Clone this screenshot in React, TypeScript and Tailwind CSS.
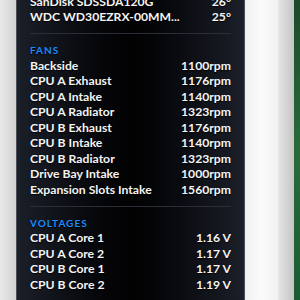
const fans: [string, string][] = [
  ["Backside", "1100rpm"],
  ["CPU A Exhaust", "1176rpm"],
  ["CPU A Intake", "1140rpm"],
  ["CPU A Radiator", "1323rpm"],
  ["CPU B Exhaust", "1176rpm"],
  ["CPU B Intake", "1140rpm"],
  ["CPU B Radiator", "1323rpm"],
  ["Drive Bay Intake", "1000rpm"],
  ["Expansion Slots Intake", "1560rpm"],
];

const voltages: [string, string][] = [
  ["CPU A Core 1", "1.16 V"],
  ["CPU A Core 2", "1.17 V"],
  ["CPU B Core 1", "1.17 V"],
  ["CPU B Core 2", "1.19 V"],
];

function Row({ label, value }: { label: string; value: string }) {
  return (
    <div className="flex h-[15.5px] items-center justify-between">
      <span>{label}</span>
      <span>{value}</span>
    </div>
  );
}

function Section({ title, rows }: { title: string; rows: [string, string][] }) {
  return (
    <div className="border-t border-[#2a2e37] pt-[9px] pb-[8px]">
      <div className="mb-[1px] h-[14px] text-[10px] leading-[14px] font-bold tracking-[0.1em] text-[#1a8cff]">{title}</div>
      {rows.map(([l, v]) => (
        <Row key={l} label={l} value={v} />
      ))}
    </div>
  );
}

export default function App() {
  return (
    <div className="flex h-[300px] w-[300px] overflow-hidden bg-[#f4f4f4] font-['Lato',sans-serif]">
      <div className="w-[16px] bg-gradient-to-r from-[#e9e9e9] to-[#d2d2d2]" />
      <div className="w-[229px] border-x border-[#4a4e56] bg-gradient-to-r from-[#1b1f28] via-[#020203] to-[#1b1f28] px-[13px] text-[12.2px] font-bold text-[#f4f4f4] [text-shadow:0_1px_1px_rgba(0,0,0,0.9)]">
        <div className="-mt-[6px] pb-[8px]">
          <Row label="SanDisk SDSSDA120G" value="26°" />
          <Row label="WDC WD30EZRX-00MM..." value="25°" />
        </div>
        <Section title="FANS" rows={fans} />
        <Section title="VOLTAGES" rows={voltages} />
      </div>
      <div className="w-[33px] bg-gradient-to-r from-[#f0f0f0] via-[#fbfbfb] to-[#f2f2f2]" />
      <div className="w-[16px] bg-gradient-to-r from-[#e6e6e6] to-[#c4c4c4]" />
      <div className="flex-1 bg-gradient-to-b from-[#1b4a2a] via-[#2a6a3a] to-[#1d5a32]" />
    </div>
  );
}
